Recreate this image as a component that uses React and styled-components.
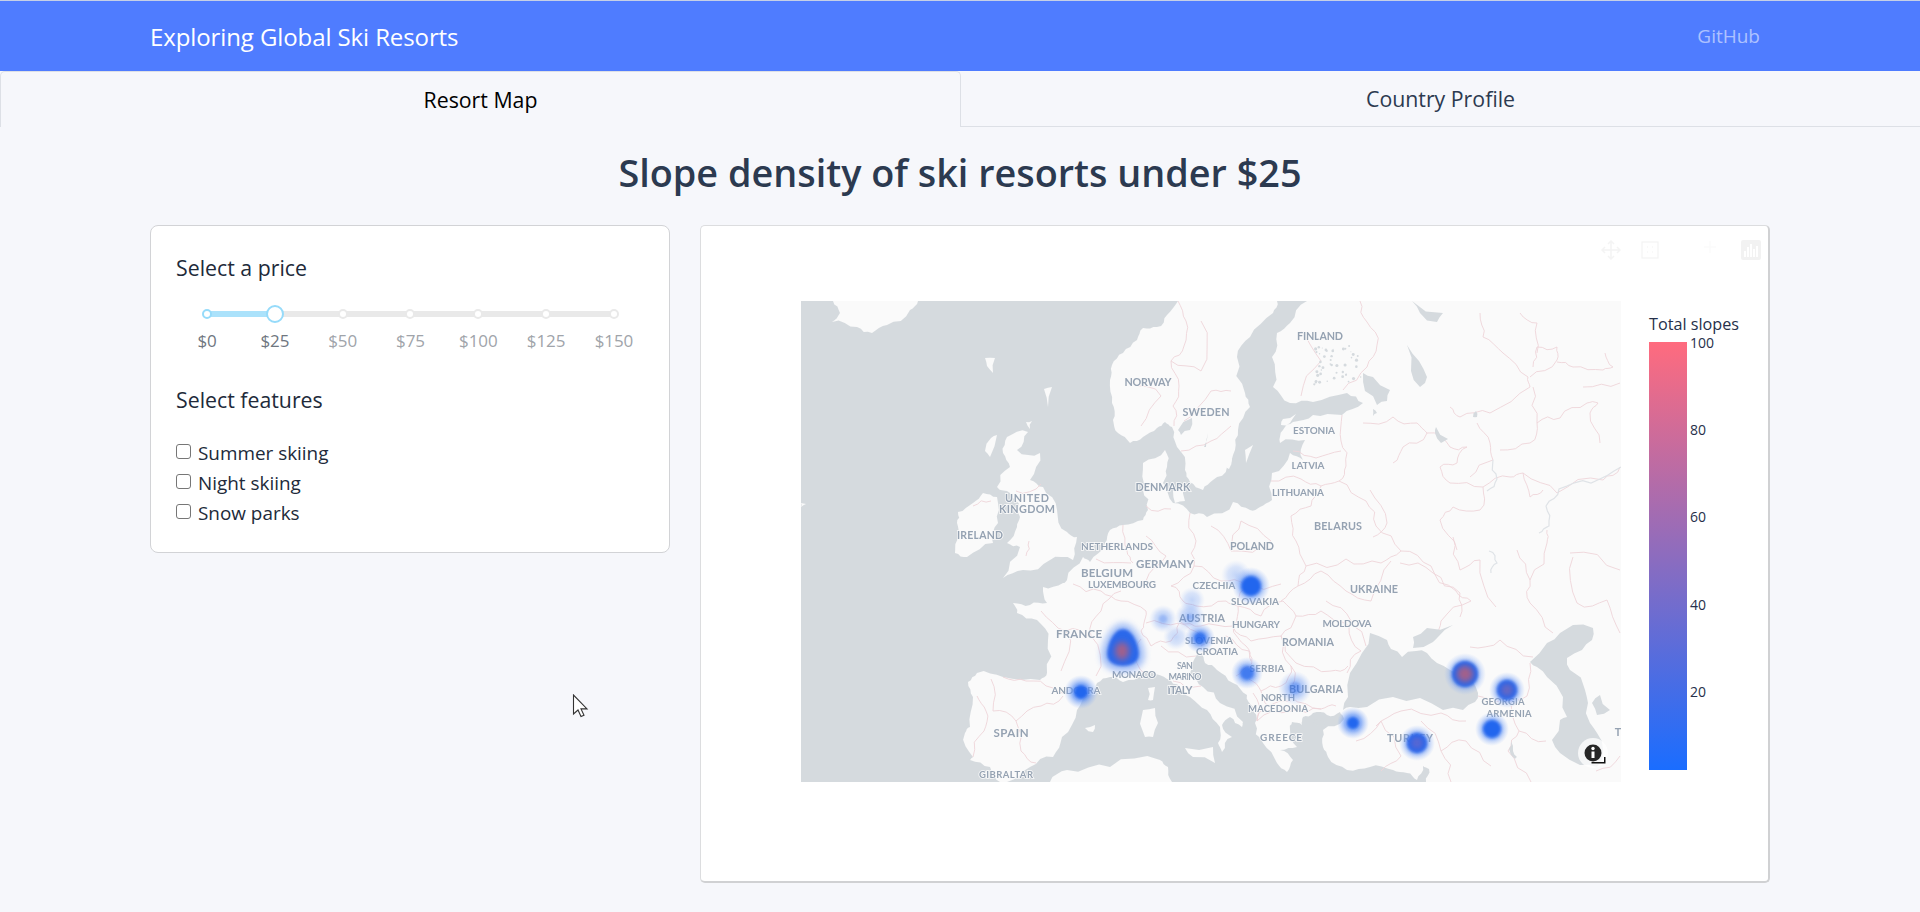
import styled, { createGlobalStyle } from "styled-components";

const FONT = `"Open Sans", "Noto Sans", sans-serif`;

const GlobalStyle = createGlobalStyle`
  html, body {
    margin: 0;
    padding: 0;
    background: #f6f7fb;
    font-family: ${FONT};
    color: #212a3a;
  }
  * { box-sizing: border-box; }
`;

const PRICES = ["$0", "$25", "$50", "$75", "$100", "$125", "$150"];
const FEATURES = ["Summer skiing", "Night skiing", "Snow parks"];
const TICKS = [100, 80, 60, 40, 20];

// map outlines, in pixels of the 820x481 map
const MAINLAND =
  "377,0 366,14 356,26 342,27 336,39 322,52 311,64 309,79 311,102 312,119 317,132 329,142 342,136 356,127 364,121 371,126 376,146 384,169 389,181 402,189 412,179 426,166 434,149 437,129 449,106 444,92 436,56 449,36 472,12 476,0 " +
  "506,0 489,22 476,32 471,56 472,86 489,102 512,101 546,92 562,102 541,114 512,114 492,121 482,129 479,142 504,139 502,159 489,152 471,172 471,199 459,206 449,209 432,201 406,216 389,212 372,202 362,182 366,166 364,149 342,162 342,189 347,209 342,219 322,224 309,229 304,242 289,261 282,256 266,279 262,282 242,286 246,302 229,304 212,302 216,312 236,319 247,339 246,372 239,379 " +
  "202,376 176,372 167,381 172,396 169,426 164,432 172,456 169,459 189,466 199,481 206,481 229,466 252,456 261,436 276,409 292,392 296,382 309,376 322,381 342,371 352,371 366,378 379,386 389,396 406,409 419,426 417,442 421,451 431,436 421,424 429,416 441,426 442,421 419,402 402,386 389,372 394,357 399,352 404,362 416,369 432,382 446,394 452,406 454,422 462,442 476,462 486,471 492,459 479,449 496,446 489,429 491,421 501,424 502,416 512,412 526,414 539,411 543,418 522,429 522,446 527,456 546,469 569,466 592,469 606,472 616,479 622,465 628,468 625,481 820,481 820,0";

const ICELAND = "32,0 39,12 31,21 56,26 71,32 86,24 109,9 117,0";
const BRITAIN =
  "227,131 206,136 202,152 209,166 196,186 209,192 219,216 216,226 206,242 219,246 202,277 222,269 249,259 272,259 276,236 266,231 256,209 242,186 229,179 239,152 216,149";
const IRELAND = "157,211 172,202 182,192 196,196 197,222 192,242 166,256 154,252 159,236 156,222";
const AFRICA = "249,481 266,469 309,466 359,459 367,466 371,481";

const ISLANDS = [
  "347,387 354,386 352,399 347,399",
  "342,409 354,407 357,422 352,436 344,436",
  "284,427 294,424 292,431",
  "384,447 412,446 414,462 392,456",
  "184,57 194,57 192,72 186,65",
  "243,88 251,86 247,106",
  "225,121 231,120 229,128",
  "190,137 196,134 189,156 184,150",
  "444,149 452,144 445,162",
  "425,165 430,155 431,158 428,168",
  "372,190 382,185 384,200 374,202",
  "495,113 482,118 480,124 489,122",
  "0,202 5,203 0,206",
];

const SEAS = [
  // black sea
  "547,396 549,372 561,352 569,332 586,339 590,348 601,356 615,350 626,352 636,362 649,369 671,379 677,392 674,401 662,409 642,409 619,397 592,396 566,406 549,406 542,409",
  // azov
  "612,336 612,347 632,341 637,336 652,324 626,327",
  // caspian
  "729,361 746,342 759,332 772,324 792,327 791,339 781,349 766,357 769,369 784,389 787,402 789,422 796,432 802,449 796,466 779,464 759,452 751,439 759,419 766,416 762,396 746,376 736,366",
  "799,394 809,409 796,414 791,402",
  // lakes
  "562,72 572,76 589,89 586,100 576,104 564,90",
  "606,44 618,60 626,76 619,86 610,70",
  "611,0 642,12 636,21 619,12",
  "377,129 391,117 389,129 380,134",
  "403,146 407,132 405,146",
  "572,108 576,112 572,115",
  "635,126 647,138 640,142 634,132",
  "672,116 675,110 676,116",
  "710,440 712,450 716,456 714,458 708,448",
  "512,422 524,424 522,420 514,418",
];

const RIVERS = [
  "820,166 790,182 758,188 745,205 748,225 738,232",
  "692,159 696,178 686,190",
  "690,272 696,262 688,250",
];

const BORDERS = [
  "377,0 385,20 383,45 370,60 378,85 372,105 373,125",
  "559,0 566,21 576,44 566,66 542,89",
  "541,114 540,140 545,165 538,180",
  "492,150 515,157 540,150",
  "470,180 500,178 520,185 538,180",
  "520,185 510,205 490,215 495,240 505,265 497,285 480,300",
  "505,265 545,258 580,262 600,250",
  "538,180 565,200 575,225 600,250 630,265 655,290 670,300 640,320 632,336",
  "679,12 682,36 702,52 727,76 729,86 689,112 659,116 649,106",
  "729,76 756,59 756,46 736,46 732,66",
  "719,12 736,22 736,52",
  "756,61 772,66 802,69 812,66 804,52",
  "782,86 819,82",
  "732,86 736,122 759,117 786,102 797,102 789,112 799,142",
  "676,122 689,142 692,159 669,176",
  "736,122 729,142 699,149",
  "562,122 592,116 616,122 626,132 602,146 592,162",
  "626,132 649,146 666,146 656,162 639,166 649,182 682,186 679,209 652,206 639,219 656,249",
  "682,186 709,176 722,172 756,192 802,179 819,166",
  "722,172 729,196 742,189",
  "569,189 586,222 572,236",
  "599,262 632,272 659,292 659,316",
  "652,236 659,269 679,259 695,306",
  "716,249 729,279 729,302 752,332",
  "729,279 746,242 746,229",
  "769,252 819,269",
  "772,256 776,302 806,299 819,332",
  "669,346 699,339 732,356",
  "677,395 710,400 726,395 729,362",
  "710,400 718,430 745,440",
  "718,430 707,450 730,481",
  "795,470 819,455",
  "555,440 580,420 600,455 580,470",
  "620,420 640,450 665,440 690,465",
  "640,450 650,481",
  "575,425 600,410 640,412 665,420",
  "202,376 225,380 252,387 262,392",
  "176,395 185,410 183,430 172,456",
  "190,378 192,410 215,420 240,405 262,395",
  "215,420 220,450 235,462",
  "240,310 265,330 290,335 300,310 320,290",
  "265,330 260,370",
  "290,335 295,375",
  "272,283 300,290 320,300 345,310 343,322",
  "343,322 340,330 350,345 370,340 378,322 345,322",
  "340,338 335,360 342,371",
  "389,212 395,240 393,265 370,285 382,300 395,305",
  "322,224 326,250 332,262",
  "295,258 330,262",
  "345,205 370,208",
  "378,320 400,325 432,325 437,305 425,300 395,305",
  "393,265 420,280 445,285 437,300",
  "445,285 480,283",
  "437,305 460,315 482,300",
  "432,325 450,340 480,335 495,315 482,300",
  "495,315 520,310 548,325 560,350 546,372",
  "480,335 495,362 530,370 547,365",
  "378,322 400,335",
  "400,345 425,335 448,350 450,365 435,375",
  "432,325 445,345 450,360",
  "480,335 490,365 480,385 460,390 448,378",
  "490,365 490,395 520,408 535,405",
  "460,390 468,405 490,400",
  "452,392 456,420 465,405",
  "456,420 490,410 520,408",
  "525,300 550,320 565,345",
  "497,285 520,270 545,290 570,300 590,260",
  "360,345 395,355",
  "372,380 400,385",
  "345,235 365,255 345,280",
  "410,225 430,250 470,240 440,220 430,250",
  "215,190 240,183",
  "228,240 225,255",
  "172,205 190,200",
  "383,120 410,90 430,90",
  "370,60 400,70 400,20",
  "330,80 360,95 340,125",
  "500,30 520,60 500,95",
  "380,150 410,140 430,125",
];

// text, centre x, baseline y, width, size
const LABELS = [
  ["NORWAY", 347, 85, 47, 10.8],
  ["SWEDEN", 405, 115, 47, 10.8],
  ["UNITED", 226, 201, 44, 10.8],
  ["KINGDOM", 226, 212, 56, 10.8],
  ["IRELAND", 179, 238, 46, 10.5],
  ["DENMARK", 362, 190, 55, 10.8],
  ["NETHERLANDS", 316, 249, 72, 10],
  ["GERMANY", 364, 267, 58, 11.5],
  ["POLAND", 451, 249, 44, 10.8],
  ["BELGIUM", 306, 276, 52, 11.5],
  ["LUXEMBOURG", 321, 287, 68, 10],
  ["CZECHIA", 413, 288, 43, 10],
  ["FINLAND", 519, 39, 46, 10.8],
  ["ESTONIA", 513, 133, 42, 10],
  ["LATVIA", 507, 168, 33, 10],
  ["LITHUANIA", 497, 195, 52, 10],
  ["BELARUS", 537, 229, 48, 10.8],
  ["SLOVAKIA", 454, 304, 48, 10],
  ["AUSTRIA", 401, 321, 46, 10.8],
  ["HUNGARY", 455, 327, 48, 10],
  ["SLOVENIA", 408, 343, 48, 10],
  ["CROATIA", 416, 354, 42, 10],
  ["ROMANIA", 507, 345, 52, 10.8],
  ["MOLDOVA", 546, 326, 49, 10],
  ["UKRAINE", 573, 292, 48, 10.8],
  ["SERBIA", 466, 371, 35, 10],
  ["BULGARIA", 515, 392, 54, 10.8],
  ["NORTH", 477, 400, 34, 9.5],
  ["MACEDONIA", 477, 411, 60, 9.5],
  ["GREECE", 480, 440, 42, 10],
  ["ITALY", 379, 393, 25, 10.8],
  ["SAN", 384, 368, 16, 9],
  ["MARINO", 384, 379, 33, 9],
  ["MONACO", 333, 377, 44, 10],
  ["FRANCE", 278, 337, 46, 11.5],
  ["ANDORRA", 275, 393, 49, 10],
  ["SPAIN", 210, 436, 35, 11.5],
  ["GIBRALTAR", 205, 477, 54, 9.5],
  ["TURKEY", 609, 441, 46, 10.8],
  ["GEORGIA", 702, 404, 43, 9.5],
  ["ARMENIA", 708, 416, 45, 9.5],
  ["T", 817, 435, 6, 10.8],
];

// heat spots: x, y, dark radius, halo radius, centre colour, strength
const HEAT = [
  [435, 274, 0, 15, null, 0.35],
  [450, 285, 10, 19, null, 1],
  [280, 391, 7, 17, null, 1],
  [362, 318, 4, 14, null, 0.45],
  [391, 299, 0, 13, null, 0.35],
  [389, 316, 3, 15, null, 0.5],
  [375, 336, 0, 13, null, 0.35],
  [399, 337, 6, 15, null, 0.9],
  [446, 372, 7, 16, null, 0.85],
  [494, 387, 6, 17, null, 0.6],
  [552, 422, 6, 16, null, 1],
  [616, 442, 10, 18, "#5b66d0", 1],
  [664, 373, 13, 21, "#a3608a", 1],
  [706, 389, 10, 18, "#6b66c0", 1],
  [691, 428, 9, 17, null, 1],
];

const hash = (a, b) => {
  const v = Math.sin(a * 12.9898 + b * 78.233) * 43758.5453;
  return v - Math.floor(v) - 0.5;
};

// breaks each straight segment into a wobbly one, so outlines look like real coasts
const wiggle = (points, closed = false, rounds = 2) => {
  let pts = points.trim().split(/\s+/).map((p) => p.split(",").map(Number));
  const onEdge = (a, b) =>
    (a[0] === b[0] && a[0] >= 820) || (a[1] === b[1] && (a[1] <= 0 || a[1] >= 481));
  for (let r = 0; r < rounds; r++) {
    const next = [];
    const count = closed ? pts.length : pts.length - 1;
    for (let i = 0; i < count; i++) {
      const a = pts[i];
      const b = pts[(i + 1) % pts.length];
      next.push(a);
      if (onEdge(a, b)) continue;
      const dx = b[0] - a[0];
      const dy = b[1] - a[1];
      const amp = hash(a[0] + r, a[1] - r) * 0.34;
      next.push([(a[0] + b[0]) / 2 - dy * amp, (a[1] + b[1]) / 2 + dx * amp]);
    }
    if (!closed) next.push(pts[pts.length - 1]);
    pts = next;
  }
  return pts.map((p) => `${p[0].toFixed(1)},${p[1].toFixed(1)}`).join(" ");
};

// small lakes of finland
const SPECKS = Array.from({ length: 46 }, (_, i) => ({
  x: 512 + (hash(i, 3) + 0.5) * 48,
  y: 44 + (hash(i, 7) + 0.5) * 40,
  r: 0.5 + (hash(i, 11) + 0.5) * 1.1,
}));

const Navbar = styled.nav`
  height: 71px;
  padding: 0 150px;
  background: #4f7cff;
  border-top: 1px solid #c6d0e6;
  display: flex;
  align-items: center;
  justify-content: space-between;
`;

const Brand = styled.a`
  color: #fff;
  font-size: 24px;
  letter-spacing: -0.1px;
`;

const NavLink = styled.a`
  color: rgba(255, 255, 255, 0.55);
  font-size: 19px;
  margin-right: 10px;
`;

const TabRow = styled.div`
  display: flex;
  height: 56px;
`;

const Tab = styled.div`
  flex: 1;
  display: flex;
  align-items: center;
  justify-content: center;
  font-size: 21.3px;
  color: ${(p) => (p.$active ? "#000" : "#2c3a50")};
  border: 1px solid #dde0e6;
  border-width: ${(p) => (p.$active ? "1px 1px 0 1px" : "0 0 1px 0")};
  border-radius: ${(p) => (p.$active ? "5px 5px 0 0" : "0")};
`;

const Heading = styled.h1`
  margin: 16px 0 22px;
  height: 60px;
  font-size: 37.8px;
  line-height: 60px;
  font-weight: 600;
  text-align: center;
  color: #2c3a50;
`;

const Columns = styled.main`
  display: grid;
  grid-template-columns: 520px 1070px;
  gap: 30px;
  padding: 0 150px 30px;
  align-items: start;
`;

const FilterCard = styled.section`
  height: 328px;
  padding: 27px 25px;
  background: #fff;
  border: 1px solid #d2d3d6;
  border-radius: 8px;
`;

const FilterTitle = styled.h2`
  margin: 0;
  font-size: 21.3px;
  line-height: 30px;
  font-weight: 400;
`;

const SliderBox = styled.div`
  margin: 28px 0 33px;
  padding-left: 31px;
`;

const Rail = styled.div`
  position: relative;
  width: 407px;
  height: 6px;
  background: #e9e9e9;
  border-radius: 3px;
  display: flex;
  align-items: center;
  justify-content: space-between;
`;

const RailFill = styled.div`
  position: absolute;
  left: 0;
  top: 0;
  bottom: 0;
  background: #abe2fb;
  border-radius: 3px;
`;

const Dot = styled.span`
  position: relative;
  flex: 0 0 auto;
  width: ${(p) => (p.$handle ? "18px" : "10px")};
  height: ${(p) => (p.$handle ? "18px" : "10px")};
  margin: 0 ${(p) => (p.$handle ? "-9px" : "-5px")};
  background: #fff;
  border: 2px solid ${(p) => (p.$on ? "#96dbfa" : "#e9e9e9")};
  border-radius: 50%;
`;

const PriceRow = styled.div`
  display: flex;
  width: 474.6px;
  margin: 13px 0 0 -33.8px;
`;

const Price = styled.span`
  width: 67.8px;
  text-align: center;
  font-size: 17px;
  line-height: 22px;
  letter-spacing: -0.1px;
  color: ${(p) => (p.$on ? "#6f7680" : "#a0a4aa")};
`;

const CheckList = styled.div`
  margin-top: 23px;
  display: flex;
  flex-direction: column;
`;

const CheckRow = styled.label`
  height: 30px;
  display: flex;
  align-items: center;
  gap: 7px;
  font-size: 18.9px;
  color: #212a3a;
`;

const Check = styled.input`
  appearance: none;
  width: 15px;
  height: 15px;
  margin: 0 0 4px;
  background: #fff;
  border: 1px solid #767676;
  border-radius: 3px;
`;

const PlotCard = styled.section`
  position: relative;
  height: 658px;
  padding: 75px 0 0 100px;
  display: flex;
  background: #fff;
  border: 1px solid #dcdddf;
  border-right: 2px solid #d0d1d3;
  border-bottom: 2px solid #d0d1d3;
  border-radius: 5px;
`;

const ModeBar = styled.div`
  position: absolute;
  top: 12px;
  right: 7px;
  display: flex;
  align-items: center;
  gap: 20px;
  color: #f4f4f4;
`;

const ModeSpacer = styled.div`
  width: 18px;
  margin: 0 2px 0 22px;
  color: #fafafa;
`;

const LogoBox = styled.div`
  width: 20px;
  height: 20px;
  padding: 3px;
  background: #f2f2f2;
  border-radius: 2px;
  display: flex;
  align-items: flex-end;
  justify-content: space-between;
`;

const LogoBar = styled.i`
  width: 2px;
  height: ${(p) => p.$h}px;
  background: #fff;
`;

const MapFrame = styled.svg`
  display: block;
  flex: 0 0 auto;
  width: 820px;
  height: 481px;
  background: #d5dade;
`;

const Land = styled.polygon`
  fill: #fafafa;
`;

const Sea = styled.polygon`
  fill: #d5dade;
`;

const Border = styled.polyline`
  fill: none;
  stroke: #eed5d9;
  stroke-width: 0.9;
  stroke-linejoin: round;
`;

const River = styled.polyline`
  fill: none;
  stroke: #dfe3e7;
  stroke-width: 1.2;
`;

const PlaceName = styled.text`
  font-family: "Lato", ${FONT};
  font-weight: 700;
  fill: #95a2b2;
  stroke: #fafafa;
  stroke-width: 1.6px;
  paint-order: stroke;
  text-anchor: middle;
`;

const Legend = styled.div`
  margin: 15px 0 0 28px;
`;

const LegendTitle = styled.div`
  font-size: 16.2px;
  line-height: 16px;
  color: #26304a;
  white-space: nowrap;
`;

const BarRow = styled.div`
  margin-top: 10px;
  display: flex;
  gap: 3px;
`;

const ScaleBar = styled.div`
  width: 38px;
  height: 428px;
  background: linear-gradient(#ff6b7e, #1a6dff);
`;

const TickList = styled.div`
  display: flex;
  flex-direction: column;
  margin-top: -7px;
`;

const Tick = styled.span`
  height: 87.2px;
  font-size: 14px;
  line-height: 16px;
  color: #26304a;
`;

const Cursor = styled.svg`
  position: absolute;
  left: 572px;
  top: 694px;
`;

const HeatSpot = ({ spot }) => {
  const [cx, cy, dark, halo, centre, strength] = spot;
  return (
    <g opacity={strength}>
      <circle cx={cx} cy={cy} r={halo} fill="url(#heat-halo)" />
      {dark > 0 && <circle cx={cx} cy={cy} r={dark} fill="#2366ee" filter="url(#heat-blur)" />}
      {centre && <circle cx={cx} cy={cy} r={dark * 0.65} fill={centre} filter="url(#heat-core)" />}
    </g>
  );
};

// the pear shaped spot over the french alps
const AlpsSpot = () => (
  <g>
    <path
      d="M322 322C335 322 344 344 344 354C344 365 334 371 322 371C310 371 300 365 300 354C300 344 309 322 322 322z"
      fill="#6f9cf5"
      opacity="0.6"
      filter="url(#heat-wide)"
    />
    <path
      d="M322 328C332 328 338 345 338 353C338 361 331 365 322 365C313 365 306 361 306 353C306 345 312 328 322 328z"
      fill="#2b67ea"
      filter="url(#heat-blur)"
    />
    <ellipse cx="321" cy="350" rx="7" ry="9" fill="#a3608a" filter="url(#heat-core)" />
  </g>
);

const MapDrawing = () => (
  <MapFrame viewBox="0 0 820 481">
    <defs>
      <filter id="soft-map">
        <feGaussianBlur stdDeviation="0.4" />
      </filter>
      <filter id="heat-blur" x="-50%" y="-50%" width="200%" height="200%">
        <feGaussianBlur stdDeviation="1.4" />
      </filter>
      <filter id="heat-wide" x="-50%" y="-50%" width="200%" height="200%">
        <feGaussianBlur stdDeviation="3" />
      </filter>
      <filter id="heat-core" x="-80%" y="-80%" width="260%" height="260%">
        <feGaussianBlur stdDeviation="3" />
      </filter>
      <radialGradient id="heat-halo">
        <stop offset="0" stopColor="#3f7cf2" stopOpacity="0.85" />
        <stop offset="0.55" stopColor="#5b8ff5" stopOpacity="0.6" />
        <stop offset="1" stopColor="#8fb3f8" stopOpacity="0" />
      </radialGradient>
    </defs>
    <g filter="url(#soft-map)">
      <Land points={wiggle(MAINLAND, true)} />
      <Land points={wiggle(ICELAND, true)} />
      <Land points={wiggle(BRITAIN, true)} />
      <Land points={wiggle(IRELAND, true)} />
      <Land points={wiggle(AFRICA, true)} />
      {ISLANDS.map((points) => (
        <Land key={points} points={wiggle(points, true, 1)} />
      ))}
      {BORDERS.map((points) => (
        <Border key={points} points={wiggle(points)} />
      ))}
      {RIVERS.map((points) => (
        <River key={points} points={wiggle(points)} />
      ))}
      {SEAS.map((points) => (
        <Sea key={points} points={wiggle(points, true, 1)} />
      ))}
      {SPECKS.map((s) => (
        <circle key={`${s.x}-${s.y}`} cx={s.x} cy={s.y} r={s.r} fill="#d5dade" />
      ))}
      {LABELS.map(([name, x, y, width, size]) => (
        <PlaceName key={name} x={x} y={y} fontSize={size} textLength={width} lengthAdjust="spacing">
          {name}
        </PlaceName>
      ))}
    </g>
    {HEAT.map((spot) => (
      <HeatSpot key={`${spot[0]}-${spot[1]}`} spot={spot} />
    ))}
    <AlpsSpot />
    <circle cx="792" cy="452" r="15" fill="#fff" fillOpacity="0.75" />
    <circle cx="792" cy="452" r="8.5" fill="#262626" />
    <rect x="790.5" y="450.5" width="3" height="6.5" fill="#fff" />
    <circle cx="792" cy="447.5" r="1.7" fill="#fff" />
    <path d="M795 461h8v-5h1.5v6.500h-14V461z" fill="#111" />
  </MapFrame>
);

const ModeIcons = () => (
  <ModeBar>
    <svg width="20" height="20" viewBox="0 0 20 20" fill="none" stroke="currentColor" strokeWidth="1.5">
      <path d="M10 1v18M1 10h18M7 4l3-3 3 3M7 16l3 3 3-3M4 7l-3 3 3 3M16 7l3 3-3 3" />
    </svg>
    <svg width="18" height="18" viewBox="0 0 18 18" fill="none" stroke="currentColor" strokeWidth="1.2">
      <rect x="1" y="1" width="16" height="16" />
      <path d="M6 6h1M11 6h1M6 11h1M11 11h1" />
    </svg>
    <ModeSpacer>
      <svg width="18" height="18" viewBox="0 0 18 18" fill="none" stroke="currentColor" strokeWidth="1.2">
        <path d="M9 3v12M3 9h12" />
      </svg>
    </ModeSpacer>
    <LogoBox>
      {[6, 10, 13, 8, 11].map((h, i) => (
        <LogoBar key={i} $h={h} />
      ))}
    </LogoBox>
  </ModeBar>
);

const App = () => {
  return (
    <>
      <GlobalStyle />
      <Navbar>
        <Brand>Exploring Global Ski Resorts</Brand>
        <NavLink>GitHub</NavLink>
      </Navbar>
      <TabRow>
        <Tab $active>Resort Map</Tab>
        <Tab>Country Profile</Tab>
      </TabRow>
      <Heading>Slope density of ski resorts under $25</Heading>
      <Columns>
        <FilterCard>
          <FilterTitle>Select a price</FilterTitle>
          <SliderBox>
            <Rail>
              <RailFill style={{ width: `${(1 / (PRICES.length - 1)) * 100}%` }} />
              {PRICES.map((price, i) => (
                <Dot key={price} $on={i <= 1} $handle={i === 1} />
              ))}
            </Rail>
            <PriceRow>
              {PRICES.map((price, i) => (
                <Price key={price} $on={i <= 1}>
                  {price}
                </Price>
              ))}
            </PriceRow>
          </SliderBox>
          <FilterTitle>Select features</FilterTitle>
          <CheckList>
            {FEATURES.map((feature) => (
              <CheckRow key={feature}>
                <Check type="checkbox" />
                {feature}
              </CheckRow>
            ))}
          </CheckList>
        </FilterCard>
        <PlotCard>
          <ModeIcons />
          <MapDrawing />
          <Legend>
            <LegendTitle>Total slopes</LegendTitle>
            <BarRow>
              <ScaleBar />
              <TickList>
                {TICKS.map((tick) => (
                  <Tick key={tick}>{tick}</Tick>
                ))}
              </TickList>
            </BarRow>
          </Legend>
        </PlotCard>
      </Columns>
      <Cursor width="18" height="24" viewBox="0 0 18 24">
        <path d="M1.500 1v19l4.500-4 3 6.500 3-1.300-3-6.300h6z" fill="#fff" stroke="#333" strokeWidth="1.100" />
      </Cursor>
    </>
  );
};

export default App;
